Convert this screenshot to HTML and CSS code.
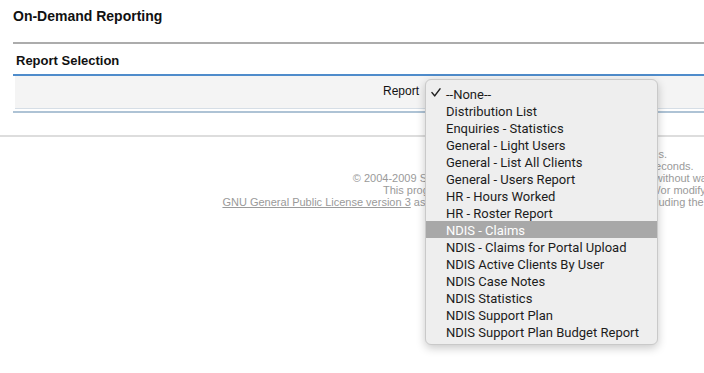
FILE: index.html
```html
<!DOCTYPE html>
<html>
<head>
<meta charset="utf-8">
<link rel="stylesheet" href="styles.css">
</head>
<body>
<div class="page">
  <h1 class="title">On-Demand Reporting</h1>
  <div class="panel">
    <h2 class="panel-head">Report Selection</h2>
    <div class="panel-body">
      <div class="field-row">
        <label class="field-label">Report</label>
        <div class="field-input">
          <div class="select-anchor"></div>
          <div class="menu">
            <div class="menu-item checked"><svg class="check" width="10" height="9" viewBox="0 0 10 9"><path d="M1 4.6 L3.7 7.9 L9 0.9" fill="none" stroke="#1f1f1f" stroke-width="1.5" stroke-linecap="round" stroke-linejoin="round"/></svg>--None--</div>
            <div class="menu-item">Distribution List</div>
            <div class="menu-item">Enquiries - Statistics</div>
            <div class="menu-item">General - Light Users</div>
            <div class="menu-item">General - List All Clients</div>
            <div class="menu-item">General - Users Report</div>
            <div class="menu-item">HR - Hours Worked</div>
            <div class="menu-item">HR - Roster Report</div>
            <div class="menu-item active">NDIS - Claims</div>
            <div class="menu-item">NDIS - Claims for Portal Upload</div>
            <div class="menu-item">NDIS Active Clients By User</div>
            <div class="menu-item">NDIS Case Notes</div>
            <div class="menu-item">NDIS Statistics</div>
            <div class="menu-item">NDIS Support Plan</div>
            <div class="menu-item">NDIS Support Plan Budget Report</div>
          </div>
        </div>
      </div>
    </div>
    <div class="panel-foot"></div>
  </div>
  <div class="footer">
    <p class="foot-line">Ran 24 database queries.</p>
    <p class="foot-line">Server response time: 0.21 seconds.</p>
    <p class="foot-line">© 2004-2009 SugarCRM Inc. The Program is provided AS IS, without warranty. Licensed under GPLv3.</p>
    <p class="foot-line">This program is free software; you can redistribute it and/or modify it under the terms of the</p>
    <p class="foot-line"><a class="foot-link" href="#">GNU General Public License version 3</a> as published by the Free Software Foundation including the additional permission set forth in the source code header.</p>
  </div>
</div>
</body>
</html>
```

FILE: styles.css
```css
html, body {
  margin: 0;
  padding: 0;
  background: #fff;
}
body {
  overflow: hidden;
  width: 704px;
  height: 373px;
  font-family: "Liberation Sans", Arial, sans-serif;
  color: #000;
}
.page {
  padding-top: 8px;
}
.title {
  margin: 0 0 0 13px;
  font-size: 14px;
  font-weight: bold;
  line-height: 16px;
  color: #111;
}
.panel {
  margin: 18px 0 0 13px;
  border-top: 2px solid #acacac;
}
.panel-head {
  margin: 0;
  padding: 9px 0 0 3px;
  box-sizing: border-box;
  height: 32px;
  font-size: 13px;
  font-weight: bold;
  line-height: 15px;
  color: #111;
  border-bottom: 2px solid #4f8ccb;
}
.panel-body {
  margin-left: 2px;
  background: #f4f4f4;
  border-bottom: 1px solid #d6dee6;
}
.field-row {
  display: flex;
  height: 32px;
}
.field-label {
  width: 404px;
  text-align: right;
  font-size: 12px;
  line-height: 14px;
  padding-top: 8px;
  color: #111;
}
.field-input {
  position: relative;
  flex: 1;
}
.select-anchor {
  height: 20px;
}
.panel-foot {
  margin-top: 2px;
  height: 2px;
  background: #aec3d5;
}
.menu {
  position: absolute;
  left: 6px;
  top: 3px;
  width: 231px;
  padding: 5px 0 4px;
  background: #eeeeee;
  border: 1px solid #c9c9c9;
  border-radius: 6px;
  box-shadow: 0 3px 10px rgba(0,0,0,0.22);
  font-family: Roboto, "Liberation Sans", sans-serif;
  font-size: 13px;
  z-index: 5;
}
.menu-item {
  position: relative;
  height: 16px;
  padding-top: 1px;
  line-height: 17px;
  padding-left: 20px;
  color: #1c1c1c;
  white-space: nowrap;
}
.menu-item.active {
  background: #a8a8a8;
  color: #fff;
}
.check {
  position: absolute;
  left: 5px;
  top: 3px;
}
.footer {
  margin-top: 22px;
  border-top: 2px solid #dddddd;
  padding-top: 11px;
  width: 1208px;
  text-align: center;
}
.foot-line {
  margin: 0;
  font-size: 11px;
  line-height: 12px;
  color: #9a9a9a;
  white-space: nowrap;
}
.foot-link {
  color: #9a9a9a;
  text-decoration: underline;
}
```
